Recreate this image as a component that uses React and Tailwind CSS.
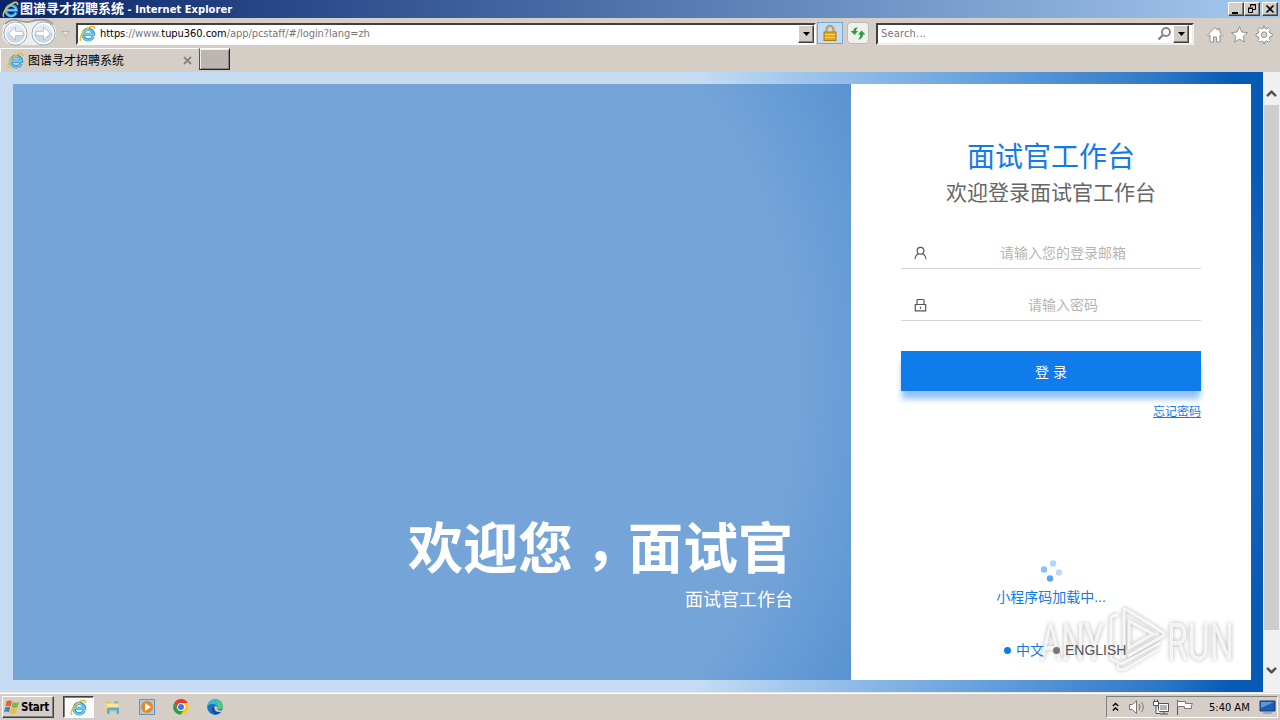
import { ChevronDown, ChevronUp } from 'lucide-react';

const uiFont = "font-['DejaVu_Sans_Condensed','DejaVu_Sans','Noto_Sans_CJK_SC',sans-serif]";
const raised =
  'border border-t-white border-l-white border-r-[#404040] border-b-[#404040] bg-[#d5cec6] shadow-[inset_-1px_-1px_0_#808080]';

function IeIcon({ size = 16 }) {
  return (
    <svg width={size} height={size} viewBox="0 0 16 16" fill="none" className="shrink-0">
      <path d="M13.300 11A5 5 0 1 1 13.700 8.700H4.500" stroke="#2a93d5" strokeWidth="3" />
      <path d="M13.300 10.800A5 5 0 1 1 13.500 8.600H4.500" stroke="#6fcdf5" strokeWidth="1.500" />
      <path d="M2 14.800C-.4 13.500 3 6.500 8.500 2.900c3.500-2.300 6.700-2.300 6 1" stroke="#efbc32" strokeWidth="1.500" />
    </svg>
  );
}

function DropButton({ className = '' }) {
  return (
    <div className={`flex w-4 shrink-0 items-center justify-center ${raised} ${className}`}>
      <svg width="7" height="4" viewBox="0 0 7 4">
        <path d="M0 0h7L3.5 4z" fill="#000" />
      </svg>
    </div>
  );
}

function TitleBar() {
  return (
    <div className="flex h-[18px] items-center bg-linear-to-r from-[#0a246a] to-[#a6caf0] pl-[2px] pr-[2px]">
      <IeIcon size={17} />
      <div className="ml-px flex-1 whitespace-nowrap text-[11px] font-bold leading-[17px] text-white">
        <span className="text-[13px]">图谱寻才招聘系统</span>
        <span className="tracking-[0.06px]"> - Internet Explorer</span>
      </div>
      <div className="flex h-[14px]">
        <div className={`w-4 ${raised}`}>
          <svg width="14" height="12" viewBox="0 0 14 12">
            <path d="M3 9h6v2H3z" />
          </svg>
        </div>
        <div className={`w-4 ${raised}`}>
          <svg width="14" height="12" viewBox="0 0 14 12" fill="none" stroke="#000">
            <path d="M5.500 4V1.500h5v5H8M5 2h6M3.500 5.500h4v4h-4zM3 5h5" />
          </svg>
        </div>
        <div className={`ml-[2px] w-4 ${raised}`}>
          <svg width="14" height="12" viewBox="0 0 14 12" fill="none" stroke="#000" strokeWidth="1.700">
            <path d="m3.500 2.500 7 7m0-7-7 7" />
          </svg>
        </div>
      </div>
    </div>
  );
}

function NavButtons() {
  return (
    <svg width="76" height="29" viewBox="0 18 76 29" className="shrink-0" fill="none">
      <path d="M3 26q3-6 12-5.500 8 2.500 14 1.500 8-2 14-1.500 9 0 13 9v7q-5 8-13 8.500H15Q4 45 2 36z" fill="#efeeee" />
      <path d="M5 24q5-4.500 11-4 7 2.500 13 2 8-2.500 14-2 6 0 10 4.500" stroke="#9d9da0" strokeWidth="1.800" />
      {[15.5, 43.5].map((x) => (
        <g key={x}>
          <circle cx={x} cy="33.500" r="11.500" fill="#cddae5" stroke="#8fa0af" />
          <path d={`M${x - 10} 33a10 10 0 0 1 20 0q-10 3-20 0`} fill="#e3ebf2" />
          <circle cx={x} cy="33.500" r="10.200" stroke="#fff" strokeWidth="1.400" />
        </g>
      ))}
      <path d="M15.500 27 8.500 33.500l7 6.500v-4.300H23v-4.400h-7.500zM43.500 27l7 6.500-7 6.500v-4.300H36v-4.400h7.500z" fill="#fff" stroke="#a3b3c1" strokeWidth=".8" />
      <path d="M61.500 31.500h8l-4 4.500z" fill="#e4e2dd" stroke="#aaa69f" strokeWidth=".8" />
    </svg>
  );
}

function AddressBar() {
  return (
    <div className="flex h-[29px] items-center">
      <NavButtons />
      <div className="mt-[2px] flex h-[22px] w-[740px] border-2 border-b-white border-l-[#404040] border-r-white border-t-[#404040] bg-white">
        <div className="flex flex-1 items-center gap-[4px] pl-px">
          <IeIcon size={17} />
          <span className="whitespace-nowrap text-[11px] leading-none tracking-[-0.05px] text-[#777]">
            <span className="text-black">https</span>://www.<span className="text-black">tupu360.com</span>
            /app/pcstaff/#/login?lang=zh
          </span>
        </div>
        <DropButton />
      </div>
      <div className="ml-px mt-px flex h-[22px] w-[26px] items-center justify-center border border-[#78a8d8] bg-[#c2dcf6]">
        <svg width="14" height="16" viewBox="0 0 14 16" fill="none">
          <path d="M3.500 8V4.500a3.500 3.500 0 0 1 7 0V8" stroke="#a57c2b" strokeWidth="2" />
          <path d="M3.500 8V4.500a3.500 3.500 0 0 1 7 0V8" stroke="#f2d280" strokeWidth=".7" />
          <rect x="1" y="7" width="12" height="8.500" fill="#e7a916" stroke="#b27b0a" />
          <path d="M2 9.500h10M2 12.500h10" stroke="#f9d65e" />
        </svg>
      </div>
      <div className="ml-1 mt-px flex h-[22px] w-[22px] items-center justify-center rounded-sm border border-[#bcbcb8] bg-[#f0f1ee]">
        <svg width="16" height="16" viewBox="0 0 16 16" fill="#2f9a3e">
          <path d="M.500 6 4.500 10 8 6H5.900Q5.700 4 8 2.500 3.700 2 3.200 6zM8 9.500l3.500-4 4 4H13q0 4.200-5 5 2.600-2 2.300-5z" />
        </svg>
      </div>
      <div className="ml-[7px] mt-[2px] flex h-[22px] w-[318px] border-2 border-b-[#f0eeea] border-l-[#404040] border-r-[#f0eeea] border-t-[#404040] bg-white pr-[3px]">
        <span className="flex-1 pl-[3px] text-[11px] leading-[18px] tracking-[0.18px] text-[#777]">Search...</span>
        <svg width="16" height="18" viewBox="0 0 16 18" fill="none" stroke="#858585">
          <circle cx="9" cy="7" r="4" strokeWidth="1.800" />
          <path d="m6 10-4.500 4.500" strokeWidth="2.400" />
        </svg>
        <DropButton />
      </div>
      <svg width="70" height="20" viewBox="0 0 70 20" className="ml-3 mt-[5px]" fill="#fff" stroke="#929292">
        <path d="m1 10.500 8-8 3 3V3.500h2v4l3 3-1 1-2-1.700V17h-3.500v-5h-3v5H4V9.800l-2 1.700z" />
        <path d="m33.500 1.700 2.300 5.300 5.700.6-4.300 3.800 1.300 5.700-5-3-5 3 1.300-5.700-4.300-3.800 5.700-.6z" />
        <path d="m56.600 1.500.6 2.300 1.500.6 2.100-1.200 1.800 1.800-1.200 2.100.6 1.500 2.300.6v2.600l-2.300.6-.6 1.500 1.200 2.100-1.800 1.800-2.100-1.200-1.500.6-.6 2.300H56l-.6-2.300-1.500-.6-2.100 1.200-1.800-1.800 1.200-2.100-.6-1.500-2.300-.6V9.200l2.300-.6.6-1.500L50 5l1.800-1.800 2.100 1.200 1.500-.6.600-2.300z" transform="translate(1.800 -.5)" />
        <circle cx="58.100" cy="9.700" r="2.800" fill="#d8d4cd" />
      </svg>
    </div>
  );
}

function TabStrip() {
  return (
    <div className="flex h-[25px]">
      <div className="mt-px flex w-[198px] items-center border-l border-t border-white pl-[6px] pr-[6px]">
        <IeIcon size={17} />
        <span className="ml-[4px] flex-1 text-[12px] leading-none">图谱寻才招聘系统</span>
        <svg width="9" height="9" viewBox="0 0 9 9" stroke="#858585" strokeWidth="1.900">
          <path d="m1 1 7 7m0-7L1 8" />
        </svg>
      </div>
      <div className="ml-px mt-px h-[22px] w-[31px] border border-b-[#222] border-l-[#555] border-r-[#222] border-t-white bg-[#bbb6b0] shadow-[inset_1px_1px_0_#eee,inset_-1px_-1px_0_#858585]" />
    </div>
  );
}

function Field({ icon, text }) {
  return (
    <div className="flex h-8 items-center border-b border-[#d5d5d5]">
      <div className="flex w-[38px] justify-center">{icon}</div>
      <span className="flex-1 pr-[14px] text-center text-[14px] leading-none text-[#b5b5b5]">{text}</span>
    </div>
  );
}

const userIcon = (
  <svg width="14" height="14" viewBox="0 0 14 14" fill="none" stroke="#555" strokeWidth="1.200">
    <circle cx="7.500" cy="4.700" r="3.400" />
    <path d="M2 13.200q.3-4.300 3.700-5.400M13 13.200q-.3-4.300-3.700-5.400" />
  </svg>
);

const lockIcon = (
  <svg width="14" height="14" viewBox="0 0 14 14" fill="none" stroke="#555" strokeWidth="1.200">
    <path d="M2.300 6.500h10.400v6.300H2.300zM4 6.500v-4q0-1 1-1h5q1 0 1 1v4M7.500 8.700v2" />
  </svg>
);

function LoginPanel() {
  return (
    <div className="flex w-[400px] flex-col bg-white px-[50px]">
      <h1 className="mt-[54px] text-center text-[28px] leading-[40px] text-[#107bea]">面试官工作台</h1>
      <h2 className="-mt-px text-center text-[21px] leading-[32px] text-[#666]">欢迎登录面试官工作台</h2>
      <div className="mt-[28px] flex flex-col gap-5">
        <Field icon={userIcon} text="请输入您的登录邮箱" />
        <Field icon={lockIcon} text="请输入密码" />
      </div>
      <button className="mt-[30px] h-10 bg-[#107bea] pt-[2px] text-[14px] text-white shadow-[0_9px_6px_-1px_rgba(16,123,234,0.45)]">
        登 录
      </button>
      <a className="mt-[11px] self-end text-[12px] leading-[20px] text-[#107bea] underline">忘记密码</a>
      <div className="mt-[137px] flex flex-col items-center">
        <svg width="24" height="24" viewBox="0 0 24 24" fill="#3b99f4">
          <circle cx="14" cy="4.500" r="3.200" opacity=".4" />
          <circle cx="5" cy="10.500" r="3.200" opacity=".6" />
          <circle cx="20" cy="13.500" r="3.200" opacity=".35" />
          <circle cx="11" cy="19.500" r="3.200" opacity=".85" />
        </svg>
        <p className="mt-[3px] text-[14px] leading-[22px] text-[#107bea]">小程序码加载中...</p>
      </div>
      <div className="relative z-10 mt-[32px] flex items-center gap-[5px] pl-[103px] text-[14px] leading-5">
        <span className="h-[7px] w-[7px] rounded-full bg-[#107bea]" />
        <span className="text-[#107bea]">中文</span>
        <span className="ml-1 h-[7px] w-[7px] rounded-full bg-[#777]" />
        <span className="text-[#555]">ENGLISH</span>
      </div>
    </div>
  );
}

function Watermark() {
  return (
    <svg
      width="210"
      height="76"
      viewBox="0 0 210 76"
      className="absolute bottom-[12px] right-[34px] overflow-visible drop-shadow-[0_0_2px_rgba(0,0,0,0.4)]"
    >
      <g fill="#fff" fillOpacity=".75" fontFamily="Roboto, sans-serif" fontSize="52">
        <text x="4" y="56" textLength="64" lengthAdjust="spacingAndGlyphs">ANY</text>
        <text x="131" y="56" textLength="67" lengthAdjust="spacingAndGlyphs">RUN</text>
      </g>
      <g fill="none" stroke="#fff" strokeOpacity=".8" strokeWidth="3" strokeLinejoin="round">
        <path d="M88 54V7q0-3 3-1l34 21q3 2 3 4l-1 1-35 20M82 11l-5 1q-2 1-2 4v39" />
        <path d="M93 17v27l24-14z" />
        <path d="M75 55l10 5 6-3 33-18M82 60v4q3 3 7 1l34-20" strokeWidth="2" />
      </g>
    </svg>
  );
}

function LoginPage() {
  return (
    <div className="flex flex-1 bg-[radial-gradient(circle_at_300px_308px,#c5dcf3_500px,#a1c7ed_580px,#5e9bda_770px,#2f78c6_910px,#075ab5_980px)] pb-[12px] pl-[13px] pr-[12px] pt-[12px] font-['Liberation_Sans','Noto_Sans_CJK_SC',sans-serif]">
      <div className="flex w-[838px] flex-col items-end justify-end bg-[radial-gradient(circle_at_287px_296px,#75a5d8_490px,#699dd6_550px,#5791d0_640px)] pb-[67px] pr-[58px] text-white">
        <p className="flex text-[55px] font-bold leading-[66px]">
          <span>欢迎您</span>
          <span className="pt-[14px] font-['Noto_Sans_CJK_TC',sans-serif] leading-[52px]">，</span>
          <span>面试官</span>
        </p>
        <p className="mt-[5px] text-[18px] leading-[26px]">面试官工作台</p>
      </div>
      <LoginPanel />
    </div>
  );
}

function ScrollBar() {
  return (
    <div className="flex w-[17px] flex-col items-center bg-[#f0f0f0] py-[14px] text-[#505050]">
      <ChevronUp size={15} strokeWidth={4} />
      <div className="mt-[4px] h-[525px] w-[15px] bg-[#cdcdcd]" />
      <div className="flex-1" />
      <ChevronDown size={15} strokeWidth={4} />
    </div>
  );
}

function Taskbar() {
  return (
    <div className="flex h-[27px] items-center border-t border-white bg-[#d5cec6] pl-[2px] pr-[2px]">
      <div className={`flex h-[22px] w-[52px] items-center gap-px pl-px ${raised}`}>
        <svg width="16" height="16" viewBox="0 0 16 16" className="shrink-0">
          <path d="M2.500 2.500q3-2 5.500 0L6.500 7.500q-3-1.500-5 0z" fill="#e96328" />
          <path d="M9 3q3 2 6 0l-1.500 5q-3 1.700-6 0z" fill="#76b843" />
          <path d="M1.300 8.500q3-1.500 5 0L5 13.300q-2.500-1.500-5 0z" fill="#3e82cb" />
          <path d="M7.300 9q3 1.700 6 0L12 14q-3 1.700-6 0z" fill="#f4bd27" />
        </svg>
        <span className="pt-px text-[11.500px] font-bold leading-none tracking-[-0.300px]">Start</span>
      </div>
      <div className="ml-[9px] flex h-[22px] w-[31px] items-center justify-center border border-b-white border-l-[#404040] border-r-white border-t-[#404040] bg-[#fbfaf8] shadow-[inset_1px_1px_0_#808080]">
        <IeIcon size={17} />
      </div>
      <div className="ml-[11px] flex items-center gap-[18px]">
        <svg width="16" height="16" viewBox="0 0 16 16">
          <path d="M1 2h5l1 2h7v9H1z" fill="#e9c45f" />
          <path d="M1.500 4.500h12V12h-12z" fill="#f8e8a0" />
          <path d="M2 15V9.500q0-1 1-1h10q1 0 1 1V15h-2.500v-3.500h-7V15z" fill="#5eaad2" />
          <path d="M9 2h4.500v2.500H9z" fill="#8bc5a8" />
        </svg>
        <svg width="16" height="16" viewBox="0 0 16 16">
          <path d="M.5.500h15v15H.500z" fill="#a9cbe5" stroke="#6791b8" />
          <circle cx="8" cy="8" r="6" fill="#ef8619" />
          <path d="m6 4 6 4-6 4z" fill="#fff" />
        </svg>
        <svg width="16" height="16" viewBox="0 0 16 16">
          <circle cx="8" cy="8" r="7.800" fill="#f7ca27" />
          <path d="M1.200 4.100A7.800 7.800 0 0 1 14.800 4.100H8L4.600 10z" fill="#df3c2f" />
          <path d="M1.200 4.100a7.800 7.800 0 0 0 6.300 11.700L11.400 10H4.600z" fill="#2c9b4c" />
          <circle cx="8" cy="8" r="3.900" fill="#fff" />
          <circle cx="8" cy="8" r="3" fill="#3979dc" />
        </svg>
        <svg width="16" height="16" viewBox="0 0 16 16">
          <circle cx="8" cy="8" r="7.800" fill="#1974bd" />
          <path d="M.3 7Q1.500.2 8 .2q7.500.300 7.800 6.800-.3 4-5.500 3.500Q11 6 7 5 2.500 4.500.3 7" fill="#36bdc9" />
          <path d="M10 1q5.500 2 5.800 6-.3 4-5.500 3.500L10 8q3-3 0-7" fill="#59c675" />
          <path d="M7 7q-1 5 7.500 5-3 4-7 3.500Q2 11 7 7" fill="#10519d" />
          <path d="M8 7q2 0 2 2-.5 2 2.500 2.500h3L14 13q-6 .5-6.500-3.500Q7 8 8 7" fill="#d5cec6" />
        </svg>
      </div>
      <div className="flex-1" />
      <div className="flex h-[22px] w-[172px] items-center border border-b-white border-l-[#808080] border-r-white border-t-[#808080] pl-[5px] pr-px">
        <svg width="7" height="10" viewBox="0 0 7 10" fill="none" stroke="#000" strokeWidth="1.300">
          <path d="m.8 4 2.700-2.500L6.200 4M.8 8.500 3.500 6l2.700 2.500" />
        </svg>
        <svg width="68" height="18" viewBox="0 0 68 18" className="ml-[8px]" fill="#fff" stroke="#777">
          <path d="M2.500 6.500h3l4-4v13l-4-4h-3z" />
          <path d="M12 6q2 3 0 6M14.500 4q3.500 5 0 10" fill="none" />
          <path d="M31.500 5.500h10v8h-10zM33 16h8M37 13v3" stroke="#555" />
          <path d="M33 7h7v5h-7z" fill="#b4b4b4" stroke="none" />
          <path d="M26.500 3.500h5v4h-5zM29 7.500v8h4M27.500 1.500v2M30.500 1.500v2" stroke="#555" />
          <path d="M50.500 2v15" stroke="#555" />
          <path d="M50.500 3.500h8v2h7q-2 2-1 5h-7v-2h-7z" />
        </svg>
        <span className="ml-[14px] flex-1 whitespace-nowrap text-[11px] leading-none">5:40 AM</span>
        <svg width="17" height="16" viewBox="0 0 17 16">
          <path d="M1 2h15v10H1z" fill="#205bae" stroke="#173d78" />
          <path d="M2 3h13L2 9z" fill="#5b98dc" />
          <path d="M5 13h7l2 2H3z" fill="#8ba9c8" />
        </svg>
      </div>
    </div>
  );
}

function App() {
  return (
    <div className={`flex h-[720px] w-[1280px] flex-col overflow-hidden bg-[#d5cec6] text-black ${uiFont}`}>
      <TitleBar />
      <AddressBar />
      <TabStrip />
      <div className="relative flex h-[620px]">
        <LoginPage />
        <ScrollBar />
        <Watermark />
      </div>
      <div className="h-px bg-[#e8e6e2]" />
      <Taskbar />
    </div>
  );
}

export default App;
